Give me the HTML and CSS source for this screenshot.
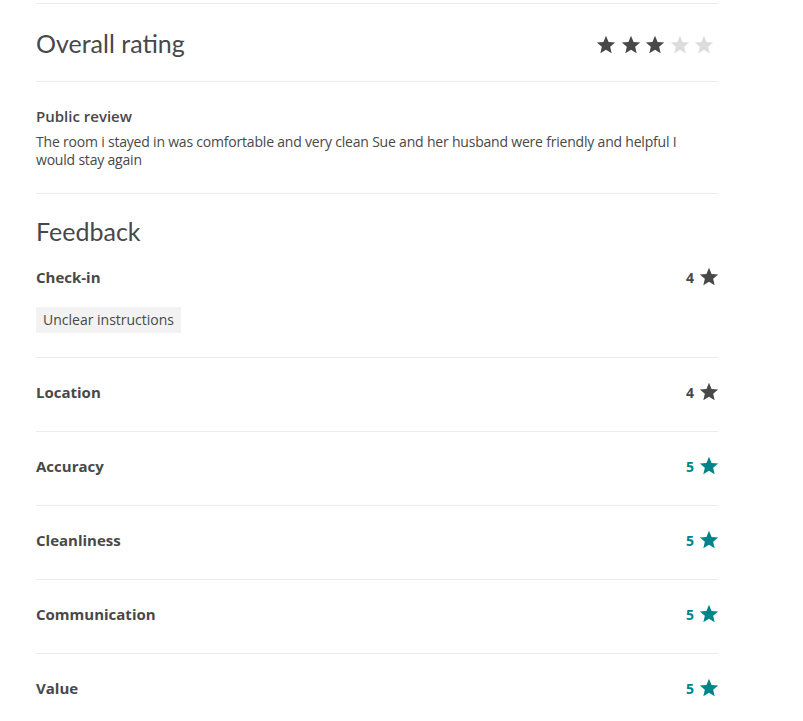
FILE: index.html
```html
<!DOCTYPE html>
<html>
<head>
<meta charset="utf-8">
<link rel="stylesheet" href="styles.css">
</head>
<body>
<main class="page">
  <section class="overall">
    <h2 class="title">Overall rating</h2>
    <div class="stars">
      <svg class="star on" viewBox="0 0 24 24"><path d="M12 17.27L18.18 21l-1.64-7.03L22 9.24l-7.19-.61L12 2 9.19 8.630 2 9.24l5.46 4.73L5.82 21z"/></svg>
      <svg class="star on" viewBox="0 0 24 24"><path d="M12 17.27L18.18 21l-1.64-7.03L22 9.24l-7.19-.61L12 2 9.19 8.63 2 9.24l5.46 4.73L5.82 21z"/></svg>
      <svg class="star on" viewBox="0 0 24 24"><path d="M12 17.27L18.18 21l-1.64-7.03L22 9.24l-7.19-.61L12 2 9.19 8.63 2 9.24l5.46 4.73L5.82 21z"/></svg>
      <svg class="star off" viewBox="0 0 24 24"><path d="M12 17.27L18.18 21l-1.64-7.03L22 9.24l-7.19-.61L12 2 9.19 8.63 2 9.24l5.46 4.73L5.82 21z"/></svg>
      <svg class="star off" viewBox="0 0 24 24"><path d="M12 17.27L18.18 21l-1.64-7.03L22 9.24l-7.19-.61L12 2 9.19 8.63 2 9.24l5.46 4.73L5.82 21z"/></svg>
    </div>
  </section>
  <section class="review">
    <h3 class="review-title">Public review</h3>
    <p class="review-text">The room i stayed in was comfortable and very clean Sue and her husband were friendly and helpful I would stay again</p>
  </section>
  <section class="feedback">
    <h2 class="title">Feedback</h2>
    <div class="item first">
      <div class="row">
        <span class="label">Check-in</span>
        <span class="score"><span class="num">4</span><svg class="mini" viewBox="0 0 24 24"><path d="M12 17.27L18.18 21l-1.64-7.03L22 9.24l-7.19-.61L12 2 9.19 8.63 2 9.24l5.46 4.73L5.82 21z"/></svg></span>
      </div>
      <span class="tag">Unclear instructions</span>
    </div>
    <div class="item">
      <div class="row">
        <span class="label">Location</span>
        <span class="score"><span class="num">4</span><svg class="mini" viewBox="0 0 24 24"><path d="M12 17.27L18.18 21l-1.64-7.03L22 9.24l-7.19-.61L12 2 9.19 8.63 2 9.24l5.46 4.73L5.82 21z"/></svg></span>
      </div>
    </div>
    <div class="item">
      <div class="row">
        <span class="label">Accuracy</span>
        <span class="score top"><span class="num">5</span><svg class="mini" viewBox="0 0 24 24"><path d="M12 17.27L18.18 21l-1.64-7.03L22 9.24l-7.19-.61L12 2 9.19 8.63 2 9.24l5.46 4.73L5.82 21z"/></svg></span>
      </div>
    </div>
    <div class="item">
      <div class="row">
        <span class="label">Cleanliness</span>
        <span class="score top"><span class="num">5</span><svg class="mini" viewBox="0 0 24 24"><path d="M12 17.27L18.18 21l-1.64-7.03L22 9.24l-7.19-.61L12 2 9.19 8.63 2 9.24l5.46 4.73L5.82 21z"/></svg></span>
      </div>
    </div>
    <div class="item">
      <div class="row">
        <span class="label">Communication</span>
        <span class="score top"><span class="num">5</span><svg class="mini" viewBox="0 0 24 24"><path d="M12 17.27L18.18 21l-1.64-7.03L22 9.24l-7.19-.61L12 2 9.19 8.63 2 9.24l5.46 4.73L5.82 21z"/></svg></span>
      </div>
    </div>
    <div class="item">
      <div class="row">
        <span class="label">Value</span>
        <span class="score top"><span class="num">5</span><svg class="mini" viewBox="0 0 24 24"><path d="M12 17.27L18.18 21l-1.64-7.03L22 9.24l-7.19-.61L12 2 9.19 8.63 2 9.24l5.46 4.73L5.82 21z"/></svg></span>
      </div>
    </div>
  </section>
</main>
</body>
</html>
```

FILE: styles.css
```css
* { box-sizing: border-box; }
html, body { margin: 0; padding: 0; background: #fff; }
body {
  font-family: "Open Sans", "Noto Sans", sans-serif;
  color: #484848;
  padding-top: 3px;
}
.page {
  width: 682px;
  margin-left: 36px;
}
.overall {
  border-top: 1px solid #ebebeb;
  height: 79px;
  display: flex;
  align-items: center;
  justify-content: space-between;
  border-bottom: 1px solid #ebebeb;
}
.title {
  margin: 0;
  font-family: "Lato", "Open Sans", sans-serif;
  font-weight: 400;
  font-size: 25px;
  line-height: 30px;
  color: #484848;
}
.stars {
  display: flex;
  gap: 2.4px;
  padding-right: 3px;
  padding-top: 4px;
}
.star { width: 22px; height: 22px; display: block; }
.star.on { fill: #484848; }
.star.off { fill: #dcdcdc; }
.review {
  padding: 24px 0 24px;
  border-bottom: 1px solid #ebebeb;
}
.review-title {
  margin: 0;
  font-size: 15px;
  font-weight: 600;
  line-height: 20px;
}
.review-text {
  margin: 7px 0 0;
  font-size: 14px;
  line-height: 18px;
  letter-spacing: -0.2px;
  max-width: 660px;
}
.feedback { padding-top: 22px; }
.item {
  border-top: 1px solid #ebebeb;
  padding: 20px 0 25px;
}
.item.first {
  border-top: none;
  padding-top: 17px;
  padding-bottom: 24px;
}
.row {
  display: flex;
  justify-content: space-between;
  align-items: center;
  height: 28px;
}
.label {
  font-family: "Open Sans", sans-serif;
  font-weight: 700;
  font-size: 15px;
}
.score {
  display: flex;
  align-items: flex-end;
  gap: 4px;
  margin-right: -2px;
  font-weight: 700;
  font-size: 14px;
  color: #484848;
  fill: #484848;
}
.score.top { color: #008489; fill: #008489; }
.num { line-height: 16px; padding-bottom: 2px; }
.mini { width: 22px; height: 22px; display: block; }
.tag {
  display: inline-block;
  margin-top: 16px;
  background: #f2f2f2;
  font-size: 14px;
  line-height: 26px;
  padding: 0 7px;
}
```
